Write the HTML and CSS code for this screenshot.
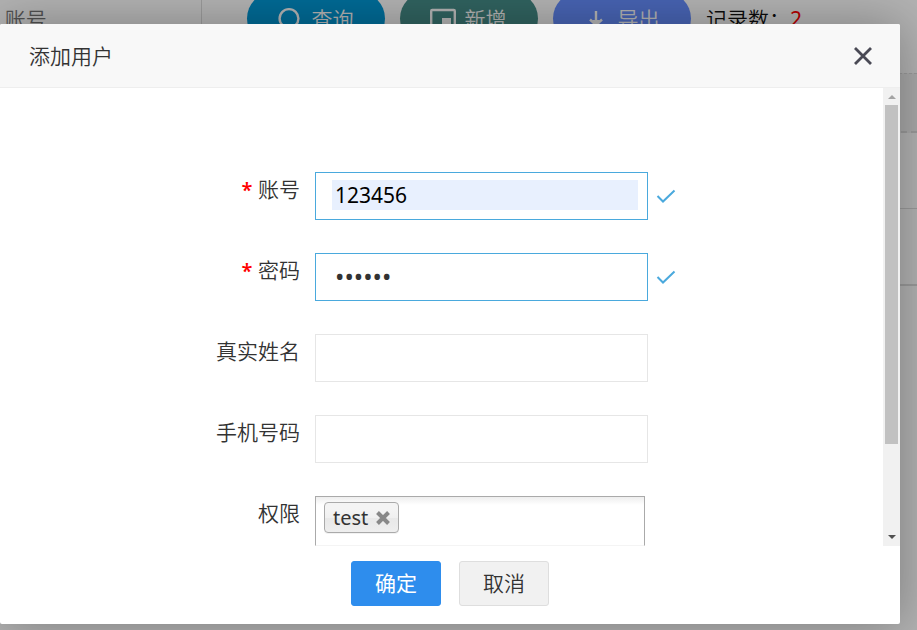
FILE: index.html
```html
<!DOCTYPE html>
<html lang="zh-CN">
<head>
<meta charset="utf-8">
<title>添加用户</title>
<link rel="stylesheet" href="styles.css">
</head>
<body>
<main class="page">
  <div class="toolbar">
    <div class="search"><label for="query">,</label><input id="query" type="text" placeholder="账号"></div>
    <button class="pill pill-query" type="button">
      <svg width="26" height="26" viewBox="0 0 26 26" fill="none" stroke="currentColor" stroke-width="2.4"><circle cx="12" cy="12.500" r="9.4"/><path d="M19 19l5 5"/></svg>
      查询
    </button>
    <button class="pill pill-add" type="button">
      <svg width="26" height="26" viewBox="0 0 26 26" fill="none" stroke="currentColor" stroke-width="2.4"><rect x="1.2" y="4" width="23.6" height="19" rx="1"/><path d="M12 12h9v7h-9z" fill="currentColor" stroke="none"/></svg>
      新增
    </button>
    <button class="pill pill-export" type="button">
      <svg width="26" height="26" viewBox="0 0 26 26" fill="none" stroke="currentColor" stroke-width="2.4"><path d="M13 5v14M7 13.500l6 5.500 6-5.500M4 24h18"/><path d="M9 14h8l-4 5z" fill="currentColor" stroke="none"/></svg>
      导出
    </button>
    <span class="count">记录数：<b class="count-value">2</b></span>
  </div>
  <div class="list-head"></div>
  <div class="list-row"></div>
  <div class="list-row"></div>
</main>

<div class="overlay">
  <form class="dialog" role="dialog" aria-labelledby="dialog-title">
    <header class="dialog-head">
      <h1 class="dialog-title" id="dialog-title">添加用户</h1>
      <button class="close" type="button" aria-label="关闭">
        <svg width="20" height="20" viewBox="0 0 20 20" fill="none" stroke="currentColor" stroke-width="2.8"><path d="M2 2l16 16M18 2L2 18"/></svg>
      </button>
    </header>
    <div class="dialog-body">
      <div class="fields">
        <div class="field">
          <label for="account"><span class="required">*</span> 账号</label>
          <div class="box valid"><input class="filled" id="account" type="text" value="123456"></div>
          <svg class="tick" width="20" height="16" viewBox="0 0 20 16" fill="none" stroke="currentColor" stroke-width="2"><path d="M1.500 8l5.500 5.500L18.500 2.500"/></svg>
        </div>
        <div class="field">
          <label for="password"><span class="required">*</span> 密码</label>
          <div class="box valid"><input id="password" type="password" value="123456"></div>
          <svg class="tick" width="20" height="16" viewBox="0 0 20 16" fill="none" stroke="currentColor" stroke-width="2"><path d="M1.500 8l5.500 5.500L18.500 2.500"/></svg>
        </div>
        <div class="field">
          <label for="realname">真实姓名</label>
          <div class="box"><input id="realname" type="text"></div>
        </div>
        <div class="field">
          <label for="phone">手机号码</label>
          <div class="box"><input id="phone" type="text"></div>
        </div>
        <div class="field">
          <label for="roles">权限</label>
          <div class="choices">
            <span class="chip">test
              <button class="chip-remove" type="button" aria-label="移除 test"><svg width="16" height="16" viewBox="0 0 16 16" fill="none" stroke="currentColor" stroke-width="4"><path d="M2.500 2.500l11 11M13.500 2.500l-11 11"/></svg></button>
            </span>
            <input id="roles" type="text">
          </div>
        </div>
      </div>
      <div class="scrollbar" aria-hidden="true">
        <span class="arrow arrow-up"></span>
        <span class="thumb"></span>
        <span class="arrow arrow-down"></span>
      </div>
    </div>
    <footer class="dialog-foot">
      <button class="btn btn-primary" type="submit">确定</button>
      <button class="btn" type="button">取消</button>
    </footer>
  </form>
</div>
</body>
</html>
```
FILE: styles.css
```css
* {
  box-sizing: border-box;
}

body {
  margin: 0;
  height: 100vh;
  overflow: hidden;
  background: #fff;
  color: #333;
  font: 350 21px/30px "Noto Sans", "Noto Sans CJK SC", sans-serif;
}

button,
input {
  margin: 0;
  padding: 0;
  border: 0;
  background: none;
  color: inherit;
  font: inherit;
  outline: 0;
}

svg {
  display: block;
  flex: none;
}

/* Page behind the dialog */
.toolbar {
  display: flex;
  align-items: center;
  gap: 15px;
  height: 53px;
  margin: -8px 0 28px;
}

.search {
  display: flex;
  align-items: center;
  width: 202px;
  height: 53px;
  margin-right: 30px;
  border-right: 1px solid #ddd;
}

.search input {
  width: 100%;
}

.search input::placeholder {
  color: #757575;
}

.pill {
  display: flex;
  align-items: center;
  justify-content: center;
  gap: 9px;
  width: 138px;
  height: 53px;
  padding-right: 2px;
  border-radius: 27px;
  color: #fff;
}

.pill-query {
  background: #0098d6;
}

.pill-add {
  background: #468d88;
}

.pill-export {
  background: #668eff;
}

.count {
  color: #111;
}

.count-value {
  color: #f00;
  font-weight: 400;
}

.list-head {
  height: 60px;
  border-top: 1px dashed #ddd;
  border-bottom: 2px dashed #ddd;
  background: #f2f2f2;
}

.list-row {
  height: 76px;
  border-bottom: 1px solid #ddd;
}

.list-row:last-child {
  height: 77px;
  border-bottom-width: 2px;
}

/* Dialog */
.overlay {
  position: absolute;
  inset: 0;
  display: flex;
  padding: 24px 17px 6px 0;
  background: rgba(0, 0, 0, 0.3);
}

.dialog {
  display: flex;
  flex: 1;
  flex-direction: column;
  border-radius: 2px;
  background: #fff;
  box-shadow: 1px 1px 50px rgba(0, 0, 0, 0.3);
}

.dialog-head {
  display: flex;
  align-items: center;
  justify-content: space-between;
  height: 64px;
  padding: 0 27px 0 29px;
  border-bottom: 1px solid #eee;
  border-radius: 2px 2px 0 0;
  background: #f8f8f8;
}

.dialog-title {
  margin: 0;
  font: inherit;
}

.close {
  color: #4a4a55;
}

.dialog-body {
  display: flex;
  flex: 1;
  min-height: 0;
  overflow: hidden;
}

.fields {
  display: flex;
  flex: 1;
  flex-direction: column;
  gap: 33px;
  padding-top: 84px;
}

.field {
  display: grid;
  grid-template-columns: 300px 333px 20px;
  column-gap: 15px;
}

.field label {
  line-height: 34px;
  text-align: right;
}

.required {
  color: #f00;
  font-size: 20px;
  font-weight: 600;
}

.box {
  height: 48px;
  padding: 7px 9px 9px 16px;
  border: 1px solid #e6e6e6;
}

.box.valid {
  border-color: #4aa9dd;
}

.box input {
  display: block;
  width: 100%;
  height: 30px;
  padding: 0 3px;
  font-weight: 400;
}

.box input[type="password"] {
  font-size: 25px;
}

.box .filled {
  background: #e8f0fe;
  color: #000;
}

.tick {
  align-self: center;
  margin-left: -7px;
  color: #4aa9dd;
}

.choices {
  display: flex;
  align-items: flex-start;
  width: 330px;
  height: 50px;
  padding: 5px 8px;
  border: 1px solid #aaa;
  border-bottom-color: #f4f4f4;
  background: linear-gradient(#eee, #fff 8px);
}

.choices input {
  flex: 1;
  min-width: 0;
}

.chip {
  display: flex;
  align-items: center;
  justify-content: space-between;
  width: 75px;
  height: 31px;
  padding: 0 7px 0 8px;
  border: 1px solid #aaa;
  border-radius: 4px;
  background: linear-gradient(#f4f4f4 20%, #f0f0f0 50%, #e8e8e8 52%, #eee);
  box-shadow: 0 1px 0 rgba(0, 0, 0, 0.05);
  font-size: 20px;
  font-weight: 400;
}

.chip-remove {
  color: #888;
}

.scrollbar {
  display: flex;
  flex-direction: column;
  align-items: center;
  width: 17px;
  background: #f1f1f1;
}

.thumb {
  width: 13px;
  height: 339px;
  background: #c1c1c1;
}

.arrow {
  border: 4px solid transparent;
}

.arrow-up {
  margin: 3px 0 6px;
  border-bottom-color: #a3a3a3;
}

.arrow-down {
  margin: auto 0 3px;
  border-top-color: #505050;
}

.dialog-foot {
  display: flex;
  justify-content: center;
  gap: 18px;
  height: 78px;
  padding-top: 15px;
}

.btn {
  width: 90px;
  height: 45px;
  padding-bottom: 2px;
  border: 1px solid #dedede;
  border-radius: 3px;
  background: #f1f1f1;
}

.btn-primary {
  border-color: #2e8ded;
  background: #2e8ded;
  color: #fff;
  font-weight: 400;
}
```
